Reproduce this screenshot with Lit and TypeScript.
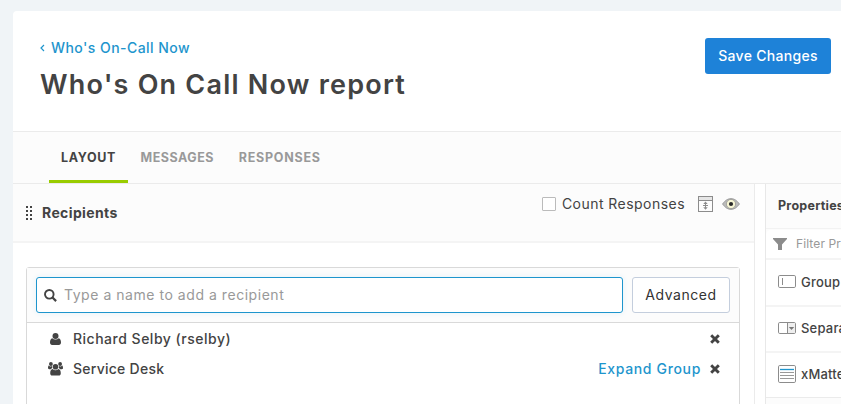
import { LitElement, html, css, svg } from "lit";
import { customElement } from "lit/decorators.js";

const userIcon = html`<svg class="person" width="11" height="12" viewBox="0 0 11 12" fill="#434343">
  <circle cx="5.5" cy="3" r="3" />
  <path d="M2.3 5.2C.7 5.6 0 7.4 0 9.6 0 11 .9 12 2.1 12h6.8C10.1 12 11 11 11 9.6c0-2.2-.7-4-2.3-4.4A4.3 4.3 0 0 1 5.5 6.6 4.3 4.3 0 0 1 2.3 5.2z" />
</svg>`;

const groupIcon = html`<svg class="group" width="15" height="14" viewBox="0 0 15 14" fill="#434343">
  <circle cx="2.9" cy="2" r="1.9" /><circle cx="12.1" cy="2" r="1.9" />
  <path d="M.9 3.6C.2 3.9 0 5 0 6.1 0 6.9.5 7.3 1.2 7.3h1.6A4 4 0 0 1 4.3 6 3.6 3.6 0 0 1 4 4.1C3 4.7 1.7 4.5.9 3.6zM14.1 3.6c.7.3.9 1.4.9 2.5 0 .8-.5 1.2-1.2 1.2h-1.6A4 4 0 0 0 10.7 6 3.6 3.6 0 0 0 11 4.1c1 .6 2.3.4 3.1-.5z" />
  <circle cx="7.5" cy="4.7" r="2.8" />
  <path d="M4.7 7.1C3 7.4 2.2 9 2.2 11.2 2.2 12.6 3 13.5 4.2 13.5h6.6c1.2 0 2-.9 2-2.3 0-2.2-.8-3.8-2.5-4.1a3.9 3.9 0 0 1-5.6 0z" />
</svg>`;

const closeIcon = html`<svg class="close" width="10" height="10" viewBox="0 0 10 10">
  <path d="M1.2 1.2l7.6 7.6M8.8 1.2l-7.6 7.6" stroke="#434343" stroke-width="2.9" />
</svg>`;

const propIcons = [
  svg`<rect x=".5" y="2.5" width="17" height="12" rx="1.3" fill="#fff" stroke="#8c8c8c" /><path d="M4.5 5v7" stroke="#8c8c8c" />`,
  svg`<rect x=".5" y="3.5" width="17" height="11" rx="1.3" fill="#fff" stroke="#8c8c8c" /><path d="M9.5 4H17v10H9.5z" fill="#eee" /><path d="M9.5 3.5v11" stroke="#8c8c8c" /><path d="M10.8 8h5.4l-2.7 3z" fill="#777" />`,
  svg`<rect x=".5" y=".5" width="17" height="17" rx="1.3" fill="#fff" stroke="#8c8c8c" /><path d="M2 4.5h14" stroke="#1e95cd" stroke-width="1.3" /><path d="M2 7.5h14M2 10.5h14M2 13.5h14" stroke="#999" />`,
];

@customElement("app-root")
export class AppRoot extends LitElement {
  static styles = css`
    :host { display: block; width: 100vw; height: 100vh; overflow: hidden; background: #f0f4f7;
      font: 500 14px/20px Inter, "Liberation Sans", sans-serif; color: #434343; }
    * { box-sizing: border-box; }
    svg { display: block; flex: none; }
    .frame { height: 100vh; padding: 11px 0 0 13px; }
    .page { height: 100%; background: #fff; border-top-left-radius: 4px; overflow: hidden; white-space: nowrap; }
    .header { height: 120px; padding: 27px 10px 0 27px; display: flex; justify-content: space-between; }
    .back { display: flex; align-items: center; color: #1e95cd; letter-spacing: .45px; }
    .back svg { margin-right: 6px; }
    .title { margin: 8px 0 0; font-size: 27px; line-height: 38px; font-weight: 600; letter-spacing: 1.22px; }
    .save { width: 126px; height: 36px; border: 0; border-radius: 3px; background: #1e82d8; color: #fff;
      font: inherit; letter-spacing: .3px; padding: 0; }
    .tabs { height: 53px; display: flex; padding-left: 36px; border: solid #ebebeb; border-width: 1px 0; background: #fcfcfc;
      font-size: 12.5px; font-weight: 700; line-height: 51px; color: #999; }
    .tab { padding: 0 12px; letter-spacing: .62px; }
    .tab.messages { padding-left: 12.5px; letter-spacing: .52px; }
    .tab.responses { letter-spacing: .75px; padding-left: 12.7px; }
    .tab.active { width: 79px; height: 51px; color: #434343; border-bottom: 3px solid #9c0; }
    .body { display: flex; height: 240px; }
    .main { width: 742px; border-right: 1px solid #ebebeb; }
    .section { height: 59px; display: flex; align-items: center; padding: 0 14px 0 13px; background: #fcfcfc; border-bottom: 2px solid #f4f4f4; }
    .recipients { margin-left: 10px; font-weight: 700; flex: 1; letter-spacing: .38px; }
    .tools { display: flex; align-items: center; margin-bottom: 17px; }
    .check { width: 14px; height: 14px; border: 1px solid #bbb; border-radius: 1px; background: #fff; }
    .count { margin: 0 13px 0 6px; letter-spacing: .46px; font-weight: 400; }
    .eye { margin-left: 9px; }
    .picker { margin: 24px 14px 0 13px; height: 160px; border: 1px solid #d9d9d9; border-radius: 3px; }
    .entry { height: 55px; padding: 9px; display: flex; gap: 9px; background: #fcfcfc; border-bottom: 1px solid #d9d9d9; }
    .search { flex: 1; height: 36px; display: flex; align-items: center; padding-left: 7px; border: 1px solid #1e95cd; border-radius: 3px;
      background: #fff; box-shadow: 0 0 6px #e4f1f8; color: #999; font-weight: 400; }
    .hint { margin-left: 7px; letter-spacing: .54px; }
    .advanced { width: 98px; height: 36px; padding: 0; border: 1px solid #c4cedd; border-radius: 3px; background: #fff; color: #333; font: inherit; font-weight: 400; letter-spacing: .55px; }
    .person-row { height: 30px; display: flex; align-items: center; padding: 0 19px; }
    .rows { padding-top: 1px; }
    .slot { width: 27px; display: flex; }
    .person { margin-left: 4px; }
    .group { margin-left: 2px; }
    .name { flex: 1; font-weight: 500; }
    .name.rselby { letter-spacing: .5px; }
    .name.desk { letter-spacing: .26px; }
    .expand { color: #1e95cd; letter-spacing: .66px; margin-right: 9px; }
    .side { flex: 1; margin-left: 10px; border-left: 1px solid #e8e8e8; overflow: hidden; background: #fcfcfc; }
    .side-title { height: 45px; padding: 0 12px; line-height: 43px; font-size: 12.5px; font-weight: 700; letter-spacing: .25px; border-bottom: 1px solid #f2f2f2; }
    .filter { height: 28px; margin-top: 1px; display: flex; align-items: center; padding-left: 7px; background: #fff; border-radius: 5px 0 0; font-size: 12px; font-weight: 400; color: #999; letter-spacing: .1px; }
    .filter svg { margin: 0 9px 0 0; }
    .list { border-bottom: 1px solid #ebebeb; }
    .prop { height: 46px; display: flex; align-items: center; gap: 5px; padding: 0 0 2px 12px; background: #fff; border-top: 2px solid #f4f4f4; font-size: 13px; letter-spacing: .2px; }
    .prop:first-child { height: 47px; }
  `;

  render() {
    return html`<div class="frame"><main class="page">
      <header class="header">
        <div>
          <div class="back"><svg width="5" height="8" viewBox="0 0 5 8" fill="none" stroke="#1e95cd" stroke-width="1.2"><path d="M4 1L1 4l3 3" /></svg><span>Who's On-Call Now</span></div>
          <h1 class="title"><span>Who's On Call Now report</span></h1>
        </div>
        <button class="save">Save Changes</button>
      </header>
      <nav class="tabs">
        <span class="tab active">LAYOUT</span><span class="tab messages">MESSAGES</span><span class="tab responses">RESPONSES</span>
      </nav>
      <div class="body">
        <section class="main">
          <div class="section">
            <svg width="6" height="14" viewBox="0 0 6 14" fill="#434343">${[0, 4, 8, 12].map((y) => svg`<rect y=${y} width="2" height="2" /><rect x="4" y=${y} width="2" height="2" />`)}</svg>
            <span class="recipients">Recipients</span>
            <div class="tools">
              <span class="check"></span><span class="count">Count Responses</span>
              <svg width="15" height="16" viewBox="0 0 15 16" fill="none" stroke="#8c8c8c"><path d="M1 1h13v3H1z" fill="#e6e6e6" stroke="none" /><rect x=".5" y=".5" width="14" height="15" /><path d="M1 4.5h13M7.5 7v6M5 9.5h5" /><path d="M5.3 8l2.2-2.4L9.7 8zM5.3 11.3l2.2 2.4 2.2-2.4z" fill="#8c8c8c" stroke="none" /></svg>
              <svg class="eye" width="18" height="12" viewBox="0 0 18 12"><path d="M.6 6C3.5 2 6 .7 9 .7S14.5 2 17.4 6C14.5 10 12 11.3 9 11.3S3.5 10 .6 6z" fill="#bbb" stroke="#999" /><circle cx="9" cy="6" r="4.6" fill="#f7f6d5" stroke="#888" stroke-width=".6" /><circle cx="9" cy="6" r="2.1" fill="#292929" /></svg>
            </div>
          </div>
          <div class="picker">
            <div class="entry">
              <div class="search"><svg width="13" height="13" viewBox="0 0 13 13" fill="none" stroke="#434343"><circle cx="5.3" cy="5.3" r="4.3" stroke-width="1.9" /><path d="M8.5 8.5l3.6 3.6" stroke-width="2.2" /></svg><span class="hint">Type a name to add a recipient</span></div>
              <button class="advanced">Advanced</button>
            </div>
            <div class="rows">
              <div class="person-row"><span class="slot">${userIcon}</span><span class="name rselby">Richard Selby (rselby)</span>${closeIcon}</div>
              <div class="person-row"><span class="slot">${groupIcon}</span><span class="name desk">Service Desk</span><span class="expand">Expand Group</span>${closeIcon}</div>
            </div>
          </div>
        </section>
        <aside class="side">
          <div class="side-title">Properties</div>
          <div class="filter"><svg width="14" height="12" viewBox="0 0 14 12" fill="#8c8c8c"><path d="M0 0h14v1L9 6.5V12H5V6.5L0 1z" /></svg><span>Filter Properties</span></div>
          <div class="list">${["Group", "Separator", "xMatters"].map((name, i) => html`<div class="prop"><svg width="18" height="18" viewBox="0 0 18 18">${propIcons[i]}</svg><span>${name}</span></div>`)}</div>
        </aside>
      </div>
    </main></div>`;
  }
}
